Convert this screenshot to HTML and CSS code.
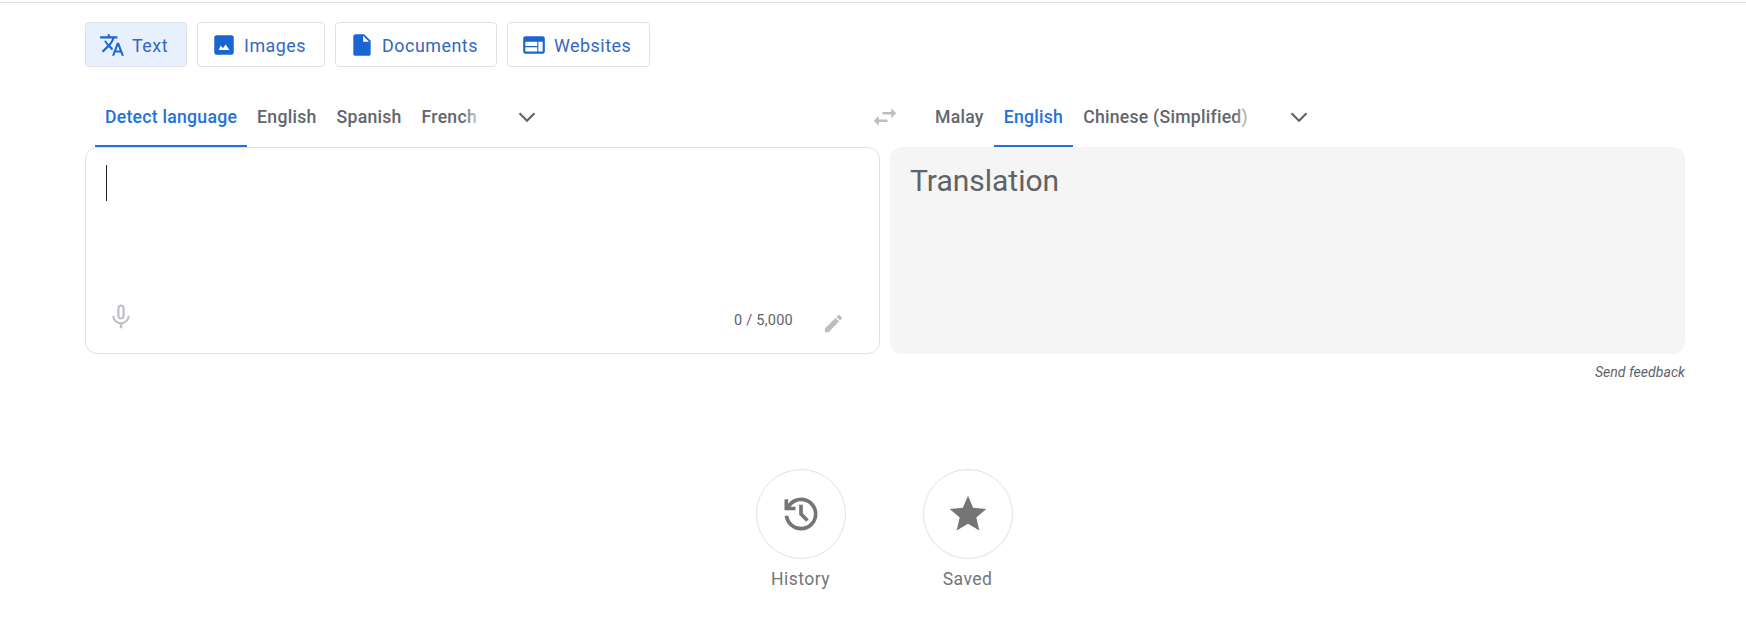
FILE: index.html
```html
<!DOCTYPE html>
<html lang="en">
<head>
<meta charset="utf-8">
<title>Translate</title>
<link rel="stylesheet" href="styles.css">
</head>
<body>
<div class="topline"></div>
<main class="page">
  <nav class="modes">
    <button class="mode active"><svg class="mode-icon" viewBox="0 0 24 24"><path d="M12.87 15.07l-2.54-2.51.03-.03c1.74-1.94 2.98-4.17 3.71-6.53H17V4h-7V2H8v2H1v1.99h11.17C11.5 7.92 10.44 9.75 9 11.35 8.07 10.32 7.3 9.19 6.69 8h-2c.73 1.63 1.73 3.17 2.98 4.56l-5.09 5.02L4 19l5-5 3.11 3.11.76-2.04zM18.5 10h-2L12 22h2l1.12-3h4.75L21 22h2l-4.5-12zm-2.62 7l1.62-4.33L19.12 17h-3.24z"/></svg><span class="mode-label">Text</span></button>
    <button class="mode"><svg class="mode-icon" viewBox="0 0 24 24"><path d="M21 19V5c0-1.1-.9-2-2-2H5c-1.1 0-2 .9-2 2v14c0 1.1.9 2 2 2h14c1.1 0 2-.9 2-2zM9 12.5l2 2.5 2.5-3.5 3.5 5H7l2-4z" fill-rule="evenodd"/></svg><span class="mode-label">Images</span></button>
    <button class="mode"><svg class="mode-icon" viewBox="0 0 24 24"><path d="M6 2c-1.1 0-1.99.9-1.99 2L4 20c0 1.1.89 2 1.99 2H18c1.1 0 2-.9 2-2V8l-6-6H6zm7 7V3.5L18.5 9H13z"/></svg><span class="mode-label">Documents</span></button>
    <button class="mode"><svg class="mode-icon" viewBox="0 0 24 24"><path d="M20 4H4c-1.1 0-1.99.9-1.99 2L2 18c0 1.1.9 2 2 2h16c1.1 0 2-.9 2-2V6c0-1.1-.9-2-2-2zm-5 14H4v-4h11v4zm0-5H4V9h11v4zm5 5h-4V9h4v9z"/></svg><span class="mode-label">Websites</span></button>
  </nav>

  <section class="translator">
    <div class="lang-bar">
      <div class="tabs">
        <span class="tab selected">Detect language</span>
        <span class="tab">English</span>
        <span class="tab">Spanish</span>
        <span class="tab faded">French</span>
      </div>
      <svg class="chevron chevron-left" viewBox="0 0 24 24"><path d="M6 9l6 6 6-6"/></svg>
      <svg class="swap" viewBox="0 0 24 24"><path d="M6.99 11L3 15l3.99 4v-3H14v-2H6.99v-3zM21 9l-3.99-4v3H10v2h7.01v3L21 9z"/></svg>
    </div>
    <div class="lang-bar lang-bar-right">
      <div class="tabs">
        <span class="tab">Malay</span>
        <span class="tab selected">English</span>
        <span class="tab faded">Chinese (Simplified)</span>
      </div>
      <svg class="chevron chevron-right" viewBox="0 0 24 24"><path d="M6 9l6 6 6-6"/></svg>
    </div>

    <div class="card source">
      <div class="caret"></div>
      <div class="source-foot">
        <svg class="mic" viewBox="0 0 24 24"><path d="M12 14c1.66 0 2.99-1.34 2.99-3L15 5c0-1.66-1.34-3-3-3S9 3.34 9 5v6c0 1.66 1.34 3 3 3zm-1.2-9.1c0-.66.54-1.2 1.2-1.2.66 0 1.2.54 1.2 1.2l-.01 6.2c0 .66-.53 1.2-1.19 1.2-.66 0-1.2-.54-1.2-1.2V4.9zm6.5 6.1c0 3-2.54 5.1-5.3 5.1S6.7 14 6.7 11H5c0 3.41 2.72 6.23 6 6.72V21h2v-3.28c3.28-.48 6-3.3 6-6.72h-1.7z"/></svg>
        <span class="count">0 / 5,000</span>
        <svg class="pencil" viewBox="0 0 24 24"><path d="M3 17.25V21h3.75L17.81 9.94l-3.75-3.75L3 17.25zM20.71 7.04c.39-.39.39-1.02 0-1.41l-2.34-2.34c-.39-.39-1.02-.39-1.41 0l-1.83 1.83 3.75 3.75 1.83-1.83z"/></svg>
      </div>
    </div>
    <div class="card target">Translation</div>
  </section>

  <div class="feedback">Send feedback</div>

  <div class="shortcuts">
    <div class="shortcut">
      <div class="circle"><svg class="circle-icon" viewBox="0 0 24 24"><path d="M12 21q-3.45 0-6.012-2.288T3.05 13H5.1q.35 2.6 2.313 4.3T12 19q2.925 0 4.963-2.037T19 12q0-2.925-2.037-4.963T12 5q-1.725 0-3.225.8T6.25 8H9v2H3V4h2v2.35q1.275-1.6 3.113-2.475T12 3q1.875 0 3.513.713t2.85 1.924q1.212 1.213 1.925 2.85T21 12q0 1.875-.713 3.513t-1.924 2.85q-1.213 1.212-2.85 1.925T12 21Zm2.8-4.8L11 12.4V7h2v4.6l3.2 3.2-1.4 1.4Z"/></svg></div>
      <div class="shortcut-label">History</div>
    </div>
    <div class="shortcut">
      <div class="circle"><svg class="circle-icon" viewBox="0 0 24 24"><path d="M12 17.27L18.18 21l-1.64-7.03L22 9.24l-7.19-.61L12 2 9.19 8.63 2 9.24l5.46 4.73L5.82 21z"/></svg></div>
      <div class="shortcut-label">Saved</div>
    </div>
  </div>
</main>
</body>
</html>
```
FILE: styles.css
```css
* { box-sizing: border-box; }
html, body { margin: 0; padding: 0; background: #fff; }
body { font-family: Roboto, "Liberation Sans", sans-serif; color: #5f6368; overflow: hidden; height: 627px; }
.topline { height: 3px; border-bottom: 1px solid #dadce0; }
.page { padding: 19px 61px 0 85px; }

.modes { display: flex; gap: 10px; }
.mode {
  display: flex; align-items: center; height: 45px; padding: 0 18px 0 13px; gap: 7px;
  background: #fff; border: 1px solid #dfe1e5; border-radius: 4px;
  color: #3367c0; font: 400 17.9px/1 Roboto, sans-serif; letter-spacing: .5px;
}
.mode.active { background: #e8f0fe; }
.mode-icon { width: 26px; height: 26px; fill: #1a65d0; flex: none; }
.mode-label { padding-top: 2px; }

.translator { display: grid; grid-template-columns: 795px 795px; column-gap: 10px; margin-top: 25px; }
.lang-bar { display: flex; align-items: flex-start; height: 55px; position: relative; padding-left: 10px; }
.tabs { display: flex; }
.tab {
  height: 55px; padding: 15px 10px 0; font-size: 17.65px; line-height: 20px; font-weight: 500;
  letter-spacing: .25px; color: #62666b; border-bottom: 2px solid transparent; white-space: nowrap; position: relative;
}
.tab.selected { color: #2272d8; border-bottom-color: #2272d8; }
.tab.faded::after {
  content: ""; position: absolute; top: 12px; bottom: 8px; right: 8px; width: 16px;
  background: linear-gradient(to right, rgba(255,255,255,0), rgba(255,255,255,.75));
}
.chevron { width: 30px; height: 30px; fill: none; stroke: #5f6368; stroke-width: 1.7; position: absolute; top: 10px; }
.chevron-left { left: 427px; }
.chevron-right { left: 394px; }
.swap { width: 30px; height: 30px; fill: #bdbdbd; position: absolute; top: 10px; left: 785px; }
.lang-bar-right { padding-left: 35px; }

.card { height: 207px; border-radius: 12px; }
.source { border: 1px solid #dfe1e5; padding: 17px 20px 0; display: flex; flex-direction: column; position: relative; }
.caret { width: 1px; height: 36px; background: #202124; }
.source-foot { margin-top: auto; height: 72px; display: flex; align-items: center; margin-left: -1px; margin-right: -1px; }
.mic { width: 30px; height: 30px; fill: #bdc1c6; margin-left: 1px; }
.count { margin-left: auto; margin-top: 6px; font-size: 14.5px; letter-spacing: .25px; color: #5f6368; }
.pencil { width: 23px; height: 23px; fill: #bdbdbd; margin-left: 28.5px; margin-right: 15.5px; margin-top: 12px; }
.target { background: #f5f5f5; padding: 16px 20px; font-size: 30px; line-height: 36px; color: #5f6368; }

.feedback { text-align: right; font-size: 14.1px; font-style: italic; color: #5f6368; line-height: 20px; margin-top: 8px; }

.shortcuts { display: flex; justify-content: center; gap: 77px; margin-top: 87px; margin-right: 2px; }
.shortcut { display: flex; flex-direction: column; align-items: center; width: 90px; }
.circle { width: 90px; height: 90px; border: 1px solid #dfe1e5; border-radius: 50%; display: flex; align-items: center; justify-content: center; }
.circle-icon { width: 44px; height: 44px; fill: #757575; }
.shortcut-label { margin-top: 10px; font-size: 17.6px; line-height: 20px; letter-spacing: .4px; color: #757575; white-space: nowrap; }
```
